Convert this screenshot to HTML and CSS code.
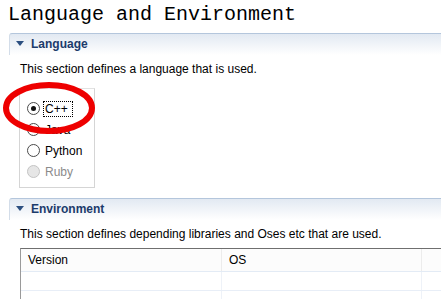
FILE: index.html
```html
<!DOCTYPE html>
<html lang="en">
<head>
    <meta charset="UTF-8">
    <title>Language and Environment</title>
    <link rel="stylesheet" href="styles.css">
</head>
<body>
    <!-- Page title -->
    <h1 class="page-title">Language and Environment</h1>

    <!-- Language section -->
    <section class="section">
        <div class="section-head"><span class="twisty"></span>Language</div>
        <p class="section-desc">This section defines a language that is used.</p>
        <div class="radio-group">
            <label class="radio checked"><span class="dot"></span><span class="label focus">C++</span></label>
            <label class="radio"><span class="dot"></span><span class="label">Java</span></label>
            <label class="radio"><span class="dot"></span><span class="label">Python</span></label>
            <label class="radio disabled"><span class="dot"></span><span class="label">Ruby</span></label>
        </div>

        <!-- Red annotation ring -->
        <svg class="mark" width="100" height="60" viewBox="0 0 100 60">
            <ellipse cx="49" cy="29" rx="43" ry="23" fill="none" stroke="#ee0000" stroke-width="6"/>
        </svg>
    </section>

    <!-- Environment section -->
    <section class="section">
        <div class="section-head"><span class="twisty"></span>Environment</div>
        <p class="section-desc">This section defines depending libraries and Oses etc that are used.</p>
        <div class="table">
            <div class="row head">
                <div class="cell">Version</div>
                <div class="cell">OS</div>
                <div class="cell"></div>
            </div>
            <div class="row">
                <div class="cell"></div>
                <div class="cell"></div>
                <div class="cell"></div>
            </div>
            <div class="row">
                <div class="cell"></div>
                <div class="cell"></div>
                <div class="cell"></div>
            </div>
        </div>
    </section>
</body>
</html>
```

FILE: styles.css
```css
/* General */
body {
    margin: 0;
    padding: 0 0 0 8px;
    background: #ffffff;
    font-family: "Segoe UI", "Liberation Sans", Arial, sans-serif;
    font-size: 12px;
    color: #000000;
    overflow: hidden;
}

.page-title {
    margin: 0;
    padding-top: 3px;
    height: 30px;
    font-family: "Liberation Mono", "DejaVu Sans Mono", monospace;
    font-size: 20px;
    font-weight: normal;
    line-height: 24px;
}

/* Sections */
.section {
    position: relative;
    margin-left: 1px;
    margin-right: -20px;
}

.section-head {
    display: flex;
    align-items: center;
    height: 19px;
    padding-left: 6px;
    padding-bottom: 2px;
    border-top: 1px solid #b4c6dc;
    border-left: 1px solid #d3dde9;
    border-top-left-radius: 3px;
    background: linear-gradient(to bottom, #e2e9f2, #ffffff);
    color: #1c3b6b;
    font-weight: bold;
}

.twisty {
    width: 0;
    height: 0;
    margin-right: 7px;
    border-left: 4px solid transparent;
    border-right: 4px solid transparent;
    border-top: 5px solid #2c4f80;
}

.section-desc {
    margin: 6px 0 11px 11px;
    line-height: 16px;
}

/* Radio group */
.radio-group {
    display: flex;
    flex-direction: column;
    width: 76px;
    height: 100px;
    margin-left: 10px;
    padding-top: 9px;
    box-sizing: border-box;
    border: 1px solid #d5d5d5;
    border-top-color: #e2e2e2;
}

.radio {
    display: flex;
    align-items: center;
    height: 21px;
    padding-left: 7px;
}

.dot {
    position: relative;
    width: 11px;
    height: 11px;
    margin-right: 4px;
    border: 1px solid #4a4a4a;
    border-radius: 50%;
    background: #ffffff;
}

.checked .dot::after {
    content: "";
    position: absolute;
    top: 3px;
    left: 3px;
    width: 5px;
    height: 5px;
    border-radius: 50%;
    background: #111111;
}

.label {
    line-height: 14px;
    padding: 0 1px;
}

.label.focus {
    outline: 1px dotted #000000;
    padding: 0 4px 0 1px;
}

.disabled .dot {
    border-color: #c4c4c4;
    background: #e6e6e6;
}

.disabled .label {
    color: #8b8b8b;
}

.mark {
    position: absolute;
    top: 46px;
    left: -9px;
}

/* Environment section */
.section + .section {
    margin-top: 10px;
}

.section + .section .section-desc {
    margin-bottom: 6px;
}

.table {
    margin-left: 11px;
    border-top: 1px solid #6f6f6f;
    border-left: 1px solid #9a9a9a;
}

.row {
    display: grid;
    grid-template-columns: 201px 200px 40px;
    height: 18px;
    border-bottom: 1px solid #e8eef7;
}

.row.head {
    height: 22px;
    background: #fcfcfc;
    border-bottom-color: #e3ebf5;
}

.cell {
    display: flex;
    align-items: center;
    padding-left: 7px;
    border-right: 1px solid #eef2f8;
}

.head .cell {
    border-right-color: #ececec;
}
```
